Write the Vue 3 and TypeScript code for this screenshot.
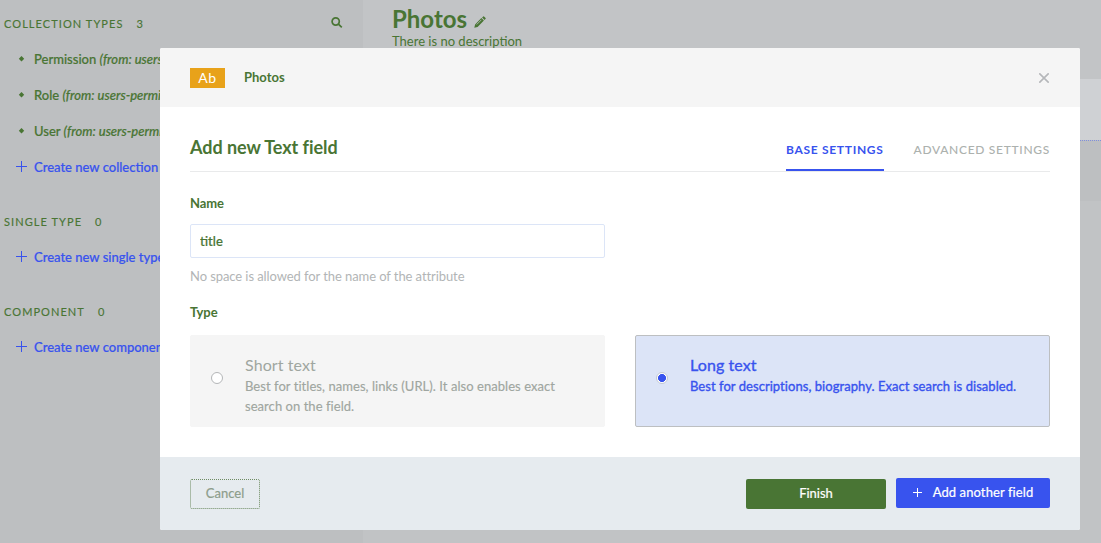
<script setup lang="ts">
import { ref } from 'vue'

interface NavItem {
  label: string
  source?: string
}

interface NavSection {
  title: string
  items: NavItem[]
  action: string
}

interface TextOption {
  id: string
  title: string
  description: string
}

const sections: NavSection[] = [
  {
    title: 'Collection types',
    items: [
      { label: 'Permission', source: '(from: users-permissions)' },
      { label: 'Role', source: '(from: users-permissions)' },
      { label: 'User', source: '(from: users-permissions)' },
    ],
    action: 'Create new collection type',
  },
  { title: 'Single type', items: [], action: 'Create new single type' },
  { title: 'Component', items: [], action: 'Create new component' },
]

const options: TextOption[] = [
  {
    id: 'short',
    title: 'Short text',
    description: 'Best for titles, names, links (URL). It also enables exact search on the field.',
  },
  {
    id: 'long',
    title: 'Long text',
    description: 'Best for descriptions, biography. Exact search is disabled.',
  },
]

const tabs = ['Base settings', 'Advanced settings']
const activeTab = ref(tabs[0])
const fieldName = ref('title')
const selected = ref('long')
</script>

<template>
  <div class="screen">
    <aside class="sidebar">
      <section v-for="(section, i) in sections" :key="section.title" class="nav-section">
        <header class="nav-head">
          <span>{{ section.title }}</span>
          <span class="count">{{ section.items.length }}</span>
          <svg v-if="i === 0" class="search" width="12" height="12" viewBox="0 0 12 12">
            <circle cx="4.7" cy="4.5" r="3.6" />
            <path d="M7.4 7.2 L10.8 10.4" />
          </svg>
        </header>
        <ul>
          <li v-for="item in section.items" :key="item.label">
            <svg class="mark" width="12" height="12" viewBox="0 0 12 12">
              <path d="M5.5 3 L8.2 5.7 L5.5 8.4 L2.8 5.7 Z" />
            </svg>
            <span>{{ item.label }} <em>{{ item.source }}</em></span>
          </li>
          <li class="create">
            <svg class="plus" width="12" height="12" viewBox="0 0 12 12">
              <path d="M5.5 0 V11 M0 5.5 H11" />
            </svg>
            <span>{{ section.action }}</span>
          </li>
        </ul>
      </section>
    </aside>

    <main class="content">
      <div class="content-head">
        <h1>
          Photos
          <svg width="12" height="12" viewBox="0 0 12 12">
            <path class="fill" d="M0.3 11.7 L1.1 8.4 L7.4 2.1 L9.9 4.6 L3.6 10.9 Z M8.1 1.4 L9.2 0.4 Q9.6 0 10 0.4 L11.6 2 Q12 2.4 11.6 2.8 L10.6 3.9 Z" />
            <path class="shine" d="M2.7 8.5 L7.4 3.8" />
          </svg>
        </h1>
        <p>There is no description</p>
      </div>
      <div class="strip"></div>
      <div class="band"></div>
      <div class="rest"></div>
    </main>

    <div class="modal">
      <header class="modal-head">
        <span class="badge">Ab</span>
        <strong>Photos</strong>
        <button class="close" aria-label="Close">
          <svg width="10" height="10" viewBox="0 0 10 10"><path d="M0.3 0.3 L9.7 9.7 M9.7 0.3 L0.3 9.7" /></svg>
        </button>
      </header>

      <div class="modal-body">
        <div class="title-row">
          <h2>Add new Text field</h2>
          <nav class="tabs">
            <button
              v-for="tab in tabs"
              :key="tab"
              :class="{ active: tab === activeTab }"
              @click="activeTab = tab"
            >{{ tab }}</button>
          </nav>
        </div>

        <label class="label" for="field-name">Name</label>
        <input id="field-name" v-model="fieldName" class="field" type="text" />
        <p class="hint">No space is allowed for the name of the attribute</p>

        <div class="label type-label">Type</div>
        <div class="options">
          <div
            v-for="option in options"
            :key="option.id"
            class="option"
            :class="{ chosen: option.id === selected }"
            @click="selected = option.id"
          >
            <span class="radio"></span>
            <div class="option-text">
              <h3>{{ option.title }}</h3>
              <p>{{ option.description }}</p>
            </div>
          </div>
        </div>
      </div>

      <footer class="modal-foot">
        <button class="btn cancel">Cancel</button>
        <button class="btn finish">Finish</button>
        <button class="btn add">
          <svg width="9" height="9" viewBox="0 0 9 9"><path d="M4.5 0 V9 M0 4.5 H9" /></svg>
          <span>Add another field</span>
        </button>
      </footer>
    </div>
  </div>
</template>

<style>
body {
  margin: 0;
  overflow: hidden;
}
</style>

<style scoped>
* {
  box-sizing: border-box;
}

.screen {
  position: relative;
  display: flex;
  width: 1101px;
  height: 543px;
  overflow: hidden;
  background: #bdbfc1;
  color: #497534;
  font-family: Lato, 'Open Sans', sans-serif;
  font-size: 13px;
}

h1, h2, h3, p, ul {
  margin: 0;
  padding: 0;
  font-weight: 400;
}

button {
  border: 0;
  padding: 0;
  background: none;
  font-family: inherit;
  color: inherit;
}

.sidebar {
  width: 363px;
  flex: none;
  padding: 14px 20px 0 4px;
}

.nav-section {
  margin-bottom: 28px;
}

.nav-head {
  display: flex;
  align-items: center;
  height: 18px;
  font-size: 11px;
  letter-spacing: 1.07px;
  text-transform: uppercase;
  -webkit-text-stroke: 0.15px currentColor;
}

.count {
  margin-left: 13px;
}

.search {
  margin-left: auto;
  fill: none;
  stroke: #497534;
  stroke-width: 1.7;
}

ul {
  list-style: none;
  padding-top: 9px;
  margin-bottom: -1px;
}

li {
  display: flex;
  align-items: center;
  height: 36px;
  padding-left: 12px;
  font-weight: 500;
  white-space: nowrap;
  -webkit-text-stroke: 0.2px currentColor;
}

li span {
  padding-bottom: 1px;
}

li svg {
  flex: none;
  margin-right: 6px;
}

.mark {
  fill: #497534;
}

.create {
  color: #3853ee;
}

.plus {
  fill: none;
  stroke: #3853ee;
  stroke-width: 1;
}

.content {
  flex: 1;
  display: flex;
  flex-direction: column;
}

.content-head {
  height: 79px;
  padding: 4px 0 0 29px;
  background: #c2c4c6;
}

h1 {
  display: flex;
  align-items: center;
  gap: 7px;
  height: 29px;
  font-size: 24px;
  font-weight: 700;
}

h1 svg {
  margin-top: 6px;
}

.fill {
  fill: #497534;
}

.shine {
  stroke: #bdbfc1;
  stroke-width: 0.8;
}

.content-head p {
  line-height: 16px;
}

.strip {
  height: 61px;
  background: #cfd1d4;
}

.band {
  height: 61px;
  border-top: 1px dotted #7f8fdc;
}

.rest {
  flex: 1;
  background: #c1c3c5;
}

.modal {
  position: absolute;
  left: 160px;
  top: 48px;
  display: flex;
  flex-direction: column;
  width: 920px;
  height: 482px;
  border-radius: 2px;
  overflow: hidden;
  background: #fff;
}

.modal-head {
  display: flex;
  align-items: center;
  height: 59px;
  padding: 0 31px 0 30px;
  background: #f5f5f5;
}

.badge {
  width: 35px;
  height: 20px;
  background: #e8a21a;
  color: #fff;
  font-size: 14px;
  text-align: center;
  line-height: 20px;
  letter-spacing: 0.5px;
}

.modal-head strong {
  margin-left: 19px;
  padding-bottom: 1px;
  font-size: 13px;
}

.close {
  display: flex;
  margin-left: auto;
}

.close svg {
  fill: none;
  stroke: #b5b7ba;
  stroke-width: 1.6;
}

.modal-body {
  flex: 1;
  padding: 20px 30px 0;
}

.title-row {
  display: flex;
  justify-content: space-between;
  height: 45px;
  border-bottom: 1px solid #e9eaeb;
}

h2 {
  font-size: 18px;
  font-weight: 700;
  line-height: 41px;
  letter-spacing: -0.05px;
}

.tabs {
  display: flex;
  gap: 30px;
}

.tabs button {
  height: 44px;
  padding-top: 2px;
  border-bottom: 2px solid transparent;
  color: #acb1ae;
  font-size: 12px;
  font-weight: 500;
  letter-spacing: 0.7px;
  text-transform: uppercase;
}

.tabs button.active {
  border-color: #3853ee;
  color: #3853ee;
  font-weight: 700;
}

.label {
  display: block;
  margin-top: 21px;
  font-size: 13px;
  font-weight: 700;
  line-height: 20px;
  letter-spacing: -0.1px;
}

.field {
  display: block;
  width: 415px;
  height: 34px;
  margin-top: 11px;
  padding: 0 9px 1px;
  border: 1px solid #dce5f7;
  border-radius: 2px;
  outline: 0;
  color: #497534;
  font: 500 13px Lato, sans-serif;
  -webkit-text-stroke: 0.2px currentColor;
}

.hint {
  margin-top: 8px;
  color: #b2b5b6;
  font-size: 13px;
  line-height: 20px;
  letter-spacing: -0.08px;
}

.type-label {
  margin-top: 16px;
}

.options {
  display: grid;
  grid-template-columns: 1fr 1fr;
  gap: 30px;
  margin-top: 13px;
}

.option {
  display: flex;
  height: 92px;
  padding: 19px 20px 0;
  border: 1px solid #f5f5f5;
  border-radius: 2px;
  background: #f5f5f5;
  color: #9fa6a0;
}

.radio {
  flex: none;
  width: 12px;
  height: 12px;
  margin: 17px 22px 0 0;
  border: 1px solid #b4b6b8;
  border-radius: 50%;
  background: #fff;
}

.option h3 {
  font-size: 16px;
  line-height: 20px;
  letter-spacing: 0.1px;
}

.option p {
  padding-top: 1px;
  font-size: 13px;
  line-height: 20px;
  letter-spacing: 0.05px;
  -webkit-text-stroke: 0.15px currentColor;
}

.chosen {
  border-color: #bdbfc1;
  background: #dce4f7;
  color: #3853ee;
}

.chosen h3,
.chosen p {
  -webkit-text-stroke: 0.35px currentColor;
}

.chosen .radio {
  border-color: #c4c9d3;
  background: radial-gradient(circle, #3853ee 3.7px, #fff 4.3px);
}

.modal-foot {
  display: flex;
  align-items: center;
  height: 73px;
  padding: 0 30px;
  background: #e6ebef;
}

.btn {
  display: flex;
  align-items: center;
  justify-content: center;
  height: 30px;
  padding-bottom: 2px;
  border-radius: 2px;
  font-size: 13px;
  -webkit-text-stroke: 0.2px currentColor;
}

.cancel {
  width: 70px;
  border: 1px dotted #6e8b62;
  color: #8d9d8b;
}

.finish {
  width: 140px;
  margin: 0 10px 0 auto;
  background: #497534;
  color: #fff;
}

.add {
  width: 154px;
  gap: 11px;
  margin-bottom: 2px;
  background: #3853ee;
  color: #fff;
  letter-spacing: 0.1px;
}

.add svg {
  margin-top: 1px;
  stroke: #fff;
  stroke-width: 1;
}
</style>
